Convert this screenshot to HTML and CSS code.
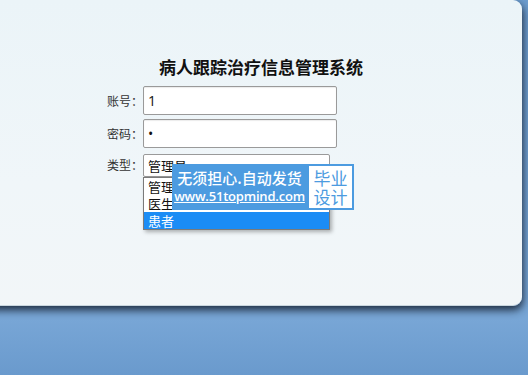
FILE: index.html
```html
<!DOCTYPE html>
<html lang="zh-CN">
<head>
    <meta charset="UTF-8">
    <title>病人跟踪治疗信息管理系统</title>
    <link rel="stylesheet" href="styles.css">
</head>
<body>
    <div class="panel">
        <h1 class="title">病人跟踪治疗信息管理系统</h1>
        <form class="login">
            <label class="label">账号：</label>
            <input class="field" type="text" value="1">
            <label class="label">密码：</label>
            <input class="field" type="password" value="1">
            <label class="label">类型：</label>
            <div class="select-wrap">
                <div class="select">管理员</div>
                <ul class="options">
                    <li>管理员</li>
                    <li>医生</li>
                    <li class="active">患者</li>
                </ul>
            </div>
        </form>
    </div>
    <div class="stamp">
        <div class="stamp-main">
            <span class="stamp-line">无须担心.自动发货</span>
            <span class="stamp-url">www.51topmind.com</span>
        </div>
        <div class="stamp-side">毕业<br>设计</div>
    </div>
</body>
</html>
```

FILE: styles.css
```css
html, body {
    margin: 0;
    height: 100%;
}
body {
    font-family: "Noto Sans CJK SC", "Noto Sans", sans-serif;
    background: linear-gradient(180deg, #6d9dcf 0%, #78a6d6 85%, #6a9acd 100%);
    overflow: hidden;
    position: relative;
}
.panel {
    width: 542px;
    height: 306px;
    margin-left: -20px;
    box-sizing: border-box;
    padding: 57px 0 0 20px;
    background: linear-gradient(180deg, #ebf4f8 0%, #f0f6f9 60%, #f2f6f8 100%);
    border-radius: 0 9px 9px 0;
    border-bottom: 1px solid #c9d6de;
    box-shadow: 1px 4px 8px rgba(20, 30, 45, 0.9);
}
.title {
    margin: 0;
    text-align: center;
    font-size: 17px;
    line-height: 20px;
    font-weight: bold;
    color: #111;
}
.login {
    margin: 9px 0 0 106px;
    display: grid;
    grid-template-columns: 37px auto;
    grid-template-rows: 29px 29px 23px;
    row-gap: 4px;
    align-items: center;
    justify-items: start;
}
.login .label:nth-of-type(3),
.select-wrap {
    margin-top: 3px;
}
.label {
    justify-self: end;
    font-size: 12px;
    color: #333;
    line-height: 14px;
}
.field {
    width: 194px;
    height: 29px;
    box-sizing: border-box;
    margin: 0;
    padding: 0 4px;
    border: 1px solid #9a9a9a;
    border-radius: 2px;
    background: #fff;
    font-family: "Open Sans", sans-serif;
    font-size: 14px;
    color: #111;
    box-shadow: inset 0 1px 1px rgba(0, 0, 0, 0.08);
}
.select-wrap {
    position: relative;
    width: 187px;
    height: 23px;
}
.select {
    height: 23px;
    box-sizing: border-box;
    border: 1px solid #9a9a9a;
    border-radius: 2px;
    background: #fff;
    padding-left: 4px;
    font-size: 13px;
    line-height: 21px;
    color: #111;
}
.options {
    position: absolute;
    top: 23px;
    left: 0;
    width: 187px;
    margin: 0;
    padding: 0;
    list-style: none;
    box-sizing: border-box;
    border: 1px solid #7a7a7a;
    background: #fff;
    box-shadow: 2px 2px 4px rgba(0, 0, 0, 0.3);
}
.options li {
    height: 17px;
    line-height: 17px;
    padding-left: 4px;
    font-size: 13px;
    color: #111;
}
.options li.active {
    background: #1b8cf5;
    color: #fff;
}
.stamp {
    position: absolute;
    left: 172px;
    top: 164px;
    display: flex;
    height: 46px;
}
.stamp-main {
    width: 135px;
    background: #4c9be0;
    display: flex;
    flex-direction: column;
    align-items: center;
    padding-top: 4px;
    box-sizing: border-box;
}
.stamp-line {
    font-size: 15px;
    line-height: 19px;
    color: #fff;
    font-weight: 500;
}
.stamp-url {
    font-family: "Open Sans", sans-serif;
    font-size: 13px;
    line-height: 19px;
    color: #fff;
    font-weight: 600;
    letter-spacing: -0.2px;
    text-decoration: underline;
}
.stamp-side {
    width: 47px;
    box-sizing: border-box;
    border: 2px solid #4c9be0;
    background: #fff;
    color: #4c9be0;
    font-size: 17px;
    line-height: 19px;
    text-align: center;
    padding-top: 2px;
}
```
